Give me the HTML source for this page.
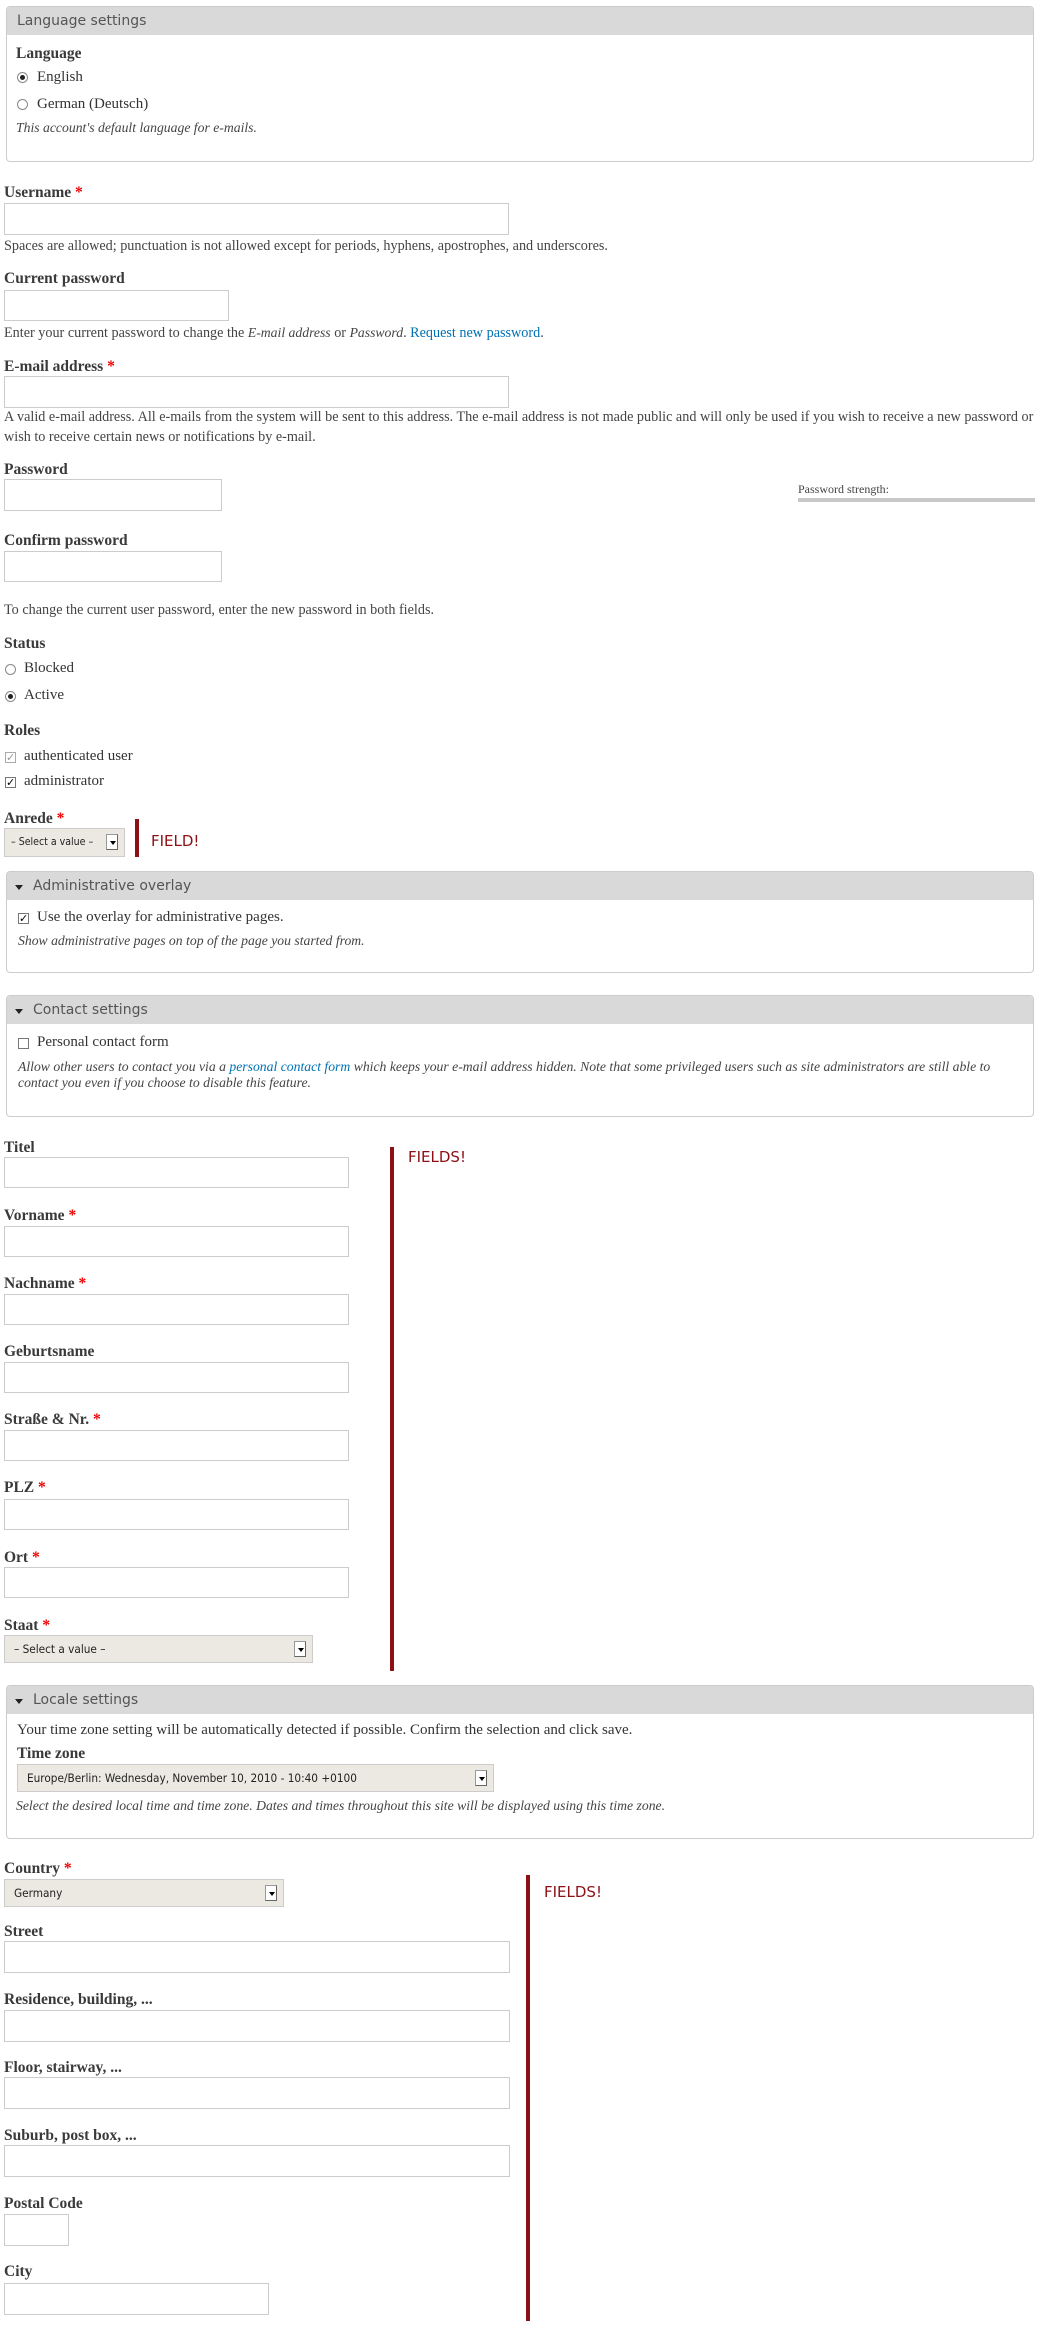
<!DOCTYPE html>
<html><head><meta charset="utf-8"><style>
*{margin:0;padding:0;box-sizing:border-box}
body{width:1042px;height:2328px;position:relative;background:#fff;font-family:"Liberation Serif",serif;color:#333;overflow:hidden}
.a{position:absolute;white-space:nowrap}
.l{position:absolute;white-space:nowrap;font-weight:bold;font-size:15.5px;line-height:18px;color:#3a3a3a;margin-top:1px}
.d{position:absolute;white-space:nowrap;font-size:14.2px;line-height:16px;color:#444}
.d i{font-size:13.7px}
.d.i{font-style:italic;font-size:13.7px}
.r{color:#e00}
.in{position:absolute;border:1px solid #ccc;background:#fff;left:4px}
.sel{position:absolute;border:1px solid #ccc;background:#ece9e2;font-family:"DejaVu Sans Condensed","DejaVu Sans",sans-serif;font-size:11.7px;color:#222;padding-left:9px}
.sel b{position:absolute;right:6px;top:5px;width:12px;height:16px;background:#fff;border:1px solid #999;border-right-color:#666;border-bottom-color:#666}
.sel b:after{content:"";position:absolute;left:3px;top:6px;border:3px solid transparent;border-top:4px solid #000}
.fs{position:absolute;left:6px;width:1028px;border:1px solid #ccc;border-radius:4px;overflow:hidden}
.fs .h{height:28px;background:#d9d9d9;font-family:"DejaVu Sans","Liberation Sans",sans-serif;font-size:14px;color:#555;line-height:28px;padding-left:26px;position:relative}
.fs .h.nt{padding-left:10px}
.fs .h:before{content:"";position:absolute;left:8px;top:13px;border:4px solid transparent;border-top:5px solid #222}
.fs .h.nt:before{display:none}
.t{position:absolute;white-space:nowrap;font-size:15px;line-height:16px;color:#333}
.rad{position:absolute;width:11px;height:11px;border:1px solid #888;border-radius:50%;background:#fff}
.rad.on:after{content:"";position:absolute;left:2px;top:2px;width:5px;height:5px;border-radius:50%;background:#222}
.cb{position:absolute;width:11px;height:11px;border:1px solid #777;background:#fff;font-size:11px;line-height:9px;text-align:center;font-family:"DejaVu Sans",sans-serif;color:#000}
.bar{position:absolute;width:4px;background:#8c1014}
.fl{position:absolute;font-family:"DejaVu Sans","Liberation Sans",sans-serif;font-size:15px;color:#8c1014;white-space:nowrap}
a{color:#0071b3;text-decoration:none}
</style></head><body>

<div class="fs" style="top:6px;height:156px"><div class="h nt">Language settings</div></div>
<div class="l" style="left:16px;top:44px">Language</div>
<div class="rad on" style="left:17px;top:72px"></div><div class="t" style="left:37px;top:69px">English</div>
<div class="rad" style="left:17px;top:99px"></div><div class="t" style="left:37px;top:96px">German (Deutsch)</div>
<div class="d i" style="left:16px;top:120px">This account's default language for e-mails.</div>

<div class="l" style="left:4px;top:183px">Username <span class="r">*</span></div>
<div class="in" style="top:203px;width:505px;height:32px"></div>
<div class="d" style="left:4px;top:238px">Spaces are allowed; punctuation is not allowed except for periods, hyphens, apostrophes, and underscores.</div>

<div class="l" style="left:4px;top:269px">Current password</div>
<div class="in" style="top:290px;width:225px;height:31px"></div>
<div class="d" style="left:4px;top:325px">Enter your current password to change the <i>E-mail address</i> or <i>Password</i>. <a>Request new password</a>.</div>

<div class="l" style="left:4px;top:357px">E-mail address <span class="r">*</span></div>
<div class="in" style="top:376px;width:505px;height:32px"></div>
<div class="d" style="left:4px;top:409px">A valid e-mail address. All e-mails from the system will be sent to this address. The e-mail address is not made public and will only be used if you wish to receive a new password or</div>
<div class="d" style="left:4px;top:429px">wish to receive certain news or notifications by e-mail.</div>

<div class="l" style="left:4px;top:460px">Password</div>
<div class="in" style="top:479px;width:218px;height:32px"></div>
<div class="d" style="left:798px;top:481px;font-size:12px">Password strength:</div>
<div class="a" style="left:798px;top:498px;width:237px;height:4px;background:#c8c8c8"></div>

<div class="l" style="left:4px;top:531px">Confirm password</div>
<div class="in" style="top:551px;width:218px;height:31px"></div>
<div class="d" style="left:4px;top:602px">To change the current user password, enter the new password in both fields.</div>

<div class="l" style="left:4px;top:634px">Status</div>
<div class="rad" style="left:5px;top:664px"></div><div class="t" style="left:24px;top:660px">Blocked</div>
<div class="rad on" style="left:5px;top:691px"></div><div class="t" style="left:24px;top:687px">Active</div>

<div class="l" style="left:4px;top:721px">Roles</div>
<div class="cb" style="left:5px;top:752px;color:#999;border-color:#aaa">✓</div><div class="t" style="left:24px;top:748px">authenticated user</div>
<div class="cb" style="left:5px;top:777px">✓</div><div class="t" style="left:24px;top:773px">administrator</div>

<div class="l" style="left:4px;top:809px">Anrede <span class="r">*</span></div>
<div class="sel" style="left:4px;top:828px;width:121px;height:29px;line-height:27px;font-size:10.5px;padding-left:6px">– Select a value –<b></b></div>
<div class="bar" style="left:135px;top:819px;height:38px"></div>
<div class="fl" style="left:151px;top:832px">FIELD!</div>

<div class="fs" style="top:871px;height:102px"><div class="h">Administrative overlay</div></div>
<div class="cb" style="left:18px;top:913px">✓</div><div class="t" style="left:37px;top:909px">Use the overlay for administrative pages.</div>
<div class="d i" style="left:18px;top:933px">Show administrative pages on top of the page you started from.</div>

<div class="fs" style="top:995px;height:122px"><div class="h">Contact settings</div></div>
<div class="cb" style="left:18px;top:1038px"></div><div class="t" style="left:37px;top:1034px">Personal contact form</div>
<div class="d i" style="left:18px;top:1059px">Allow other users to contact you via a <a>personal contact form</a> which keeps your e-mail address hidden. Note that some privileged users such as site administrators are still able to</div>
<div class="d i" style="left:18px;top:1075px">contact you even if you choose to disable this feature.</div>

<div class="l" style="left:4px;top:1138px">Titel</div>
<div class="in" style="top:1157px;width:345px;height:31px"></div>
<div class="bar" style="left:390px;top:1147px;height:524px"></div>
<div class="fl" style="left:408px;top:1148px">FIELDS!</div>

<div class="l" style="left:4px;top:1206px">Vorname <span class="r">*</span></div>
<div class="in" style="top:1226px;width:345px;height:31px"></div>
<div class="l" style="left:4px;top:1274px">Nachname <span class="r">*</span></div>
<div class="in" style="top:1294px;width:345px;height:31px"></div>
<div class="l" style="left:4px;top:1342px">Geburtsname</div>
<div class="in" style="top:1362px;width:345px;height:31px"></div>
<div class="l" style="left:4px;top:1410px">Straße &amp; Nr. <span class="r">*</span></div>
<div class="in" style="top:1430px;width:345px;height:31px"></div>
<div class="l" style="left:4px;top:1478px">PLZ <span class="r">*</span></div>
<div class="in" style="top:1499px;width:345px;height:31px"></div>
<div class="l" style="left:4px;top:1548px">Ort <span class="r">*</span></div>
<div class="in" style="top:1567px;width:345px;height:31px"></div>
<div class="l" style="left:4px;top:1616px">Staat <span class="r">*</span></div>
<div class="sel" style="left:4px;top:1635px;width:309px;height:28px;line-height:26px">– Select a value –<b></b></div>

<div class="fs" style="top:1685px;height:154px"><div class="h">Locale settings</div></div>
<div class="t" style="left:17px;top:1722px">Your time zone setting will be automatically detected if possible. Confirm the selection and click save.</div>
<div class="l" style="left:17px;top:1744px">Time zone</div>
<div class="sel" style="left:17px;top:1764px;width:477px;height:28px;line-height:26px">Europe/Berlin: Wednesday, November 10, 2010 - 10:40 +0100<b></b></div>
<div class="d i" style="left:16px;top:1798px">Select the desired local time and time zone. Dates and times throughout this site will be displayed using this time zone.</div>

<div class="l" style="left:4px;top:1859px">Country <span class="r">*</span></div>
<div class="sel" style="left:4px;top:1879px;width:280px;height:28px;line-height:26px">Germany<b></b></div>
<div class="bar" style="left:526px;top:1875px;height:446px"></div>
<div class="fl" style="left:544px;top:1883px">FIELDS!</div>

<div class="l" style="left:4px;top:1922px">Street</div>
<div class="in" style="top:1941px;width:506px;height:32px"></div>
<div class="l" style="left:4px;top:1990px">Residence, building, ...</div>
<div class="in" style="top:2010px;width:506px;height:32px"></div>
<div class="l" style="left:4px;top:2058px">Floor, stairway, ...</div>
<div class="in" style="top:2077px;width:506px;height:32px"></div>
<div class="l" style="left:4px;top:2126px">Suburb, post box, ...</div>
<div class="in" style="top:2145px;width:506px;height:32px"></div>
<div class="l" style="left:4px;top:2194px">Postal Code</div>
<div class="in" style="top:2214px;width:65px;height:32px"></div>
<div class="l" style="left:4px;top:2262px">City</div>
<div class="in" style="top:2283px;width:265px;height:32px"></div>
</body></html>
